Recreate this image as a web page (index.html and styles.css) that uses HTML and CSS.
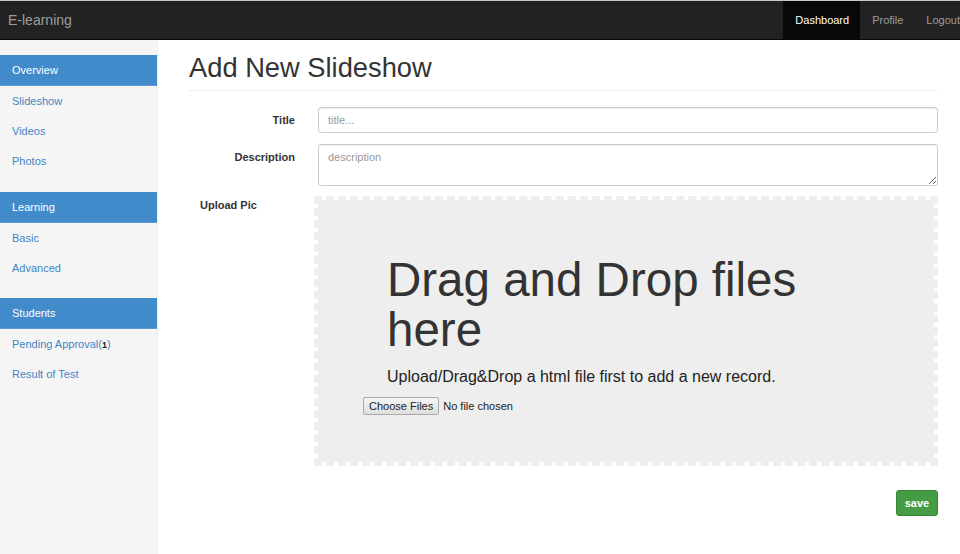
FILE: index.html
```html
<!DOCTYPE html>
<html>
<head>
<meta charset="utf-8">
<title>E-learning</title>
<link rel="stylesheet" href="styles.css">
</head>
<body>
<header class="navbar">
  <a class="brand" href="#">E-learning</a>
  <ul class="nav-right">
    <li><a class="active" href="#">Dashboard</a></li>
    <li><a href="#">Profile</a></li>
    <li><a href="#">Logout</a></li>
  </ul>
</header>
<div class="layout">
  <aside class="sidebar">
    <ul class="side-nav">
      <li class="active"><a href="#">Overview</a></li>
      <li><a href="#">Slideshow</a></li>
      <li><a href="#">Videos</a></li>
      <li><a href="#">Photos</a></li>
    </ul>
    <ul class="side-nav">
      <li class="active"><a href="#">Learning</a></li>
      <li><a href="#">Basic</a></li>
      <li><a href="#">Advanced</a></li>
    </ul>
    <ul class="side-nav">
      <li class="active"><a href="#">Students</a></li>
      <li><a href="#">Pending Approval(<b class="count">1</b>)</a></li>
      <li><a href="#">Result of Test</a></li>
    </ul>
  </aside>
  <main class="main">
    <h1 class="page-header">Add New Slideshow</h1>
    <form class="form">
      <div class="form-row">
        <label class="label">Title</label>
        <input class="control" type="text" placeholder="title...">
      </div>
      <div class="form-row">
        <label class="label">Description</label>
        <textarea class="control area" placeholder="description"></textarea>
      </div>
      <div class="upload-row">
        <label class="upload-label">Upload Pic</label>
        <div class="dropzone">
          <div class="drop-text">
            <h2 class="drop-title">Drag and Drop files here</h2>
            <p class="drop-note">Upload/Drag&amp;Drop a html file first to add a new record.</p>
          </div>
          <div class="file-input">
            <span class="file-btn">Choose Files</span>
            <span class="file-name">No file chosen</span>
          </div>
        </div>
      </div>
      <div class="actions">
        <button class="btn-save" type="button">save</button>
      </div>
    </form>
  </main>
</div>
</body>
</html>
```
FILE: styles.css
```css
* { box-sizing: border-box; }
html, body { margin: 0; padding: 0; }
body {
  font-family: "Liberation Sans", Arial, sans-serif;
  font-size: 11px;
  color: #333;
  background: #fff;
  width: 960px;
  height: 554px;
  overflow: hidden;
}
a { text-decoration: none; }
ul { list-style: none; margin: 0; padding: 0; }

.navbar {
  height: 40px;
  background: #222;
  border-top: 1px solid #c8c8c8;
  border-bottom: 1px solid #080808;
  display: flex;
  align-items: stretch;
  justify-content: space-between;
  overflow: hidden;
}
.brand {
  color: #9d9d9d;
  font-size: 14px;
  line-height: 38px;
  padding-left: 8px;
}
.nav-right {
  display: flex;
  margin-right: -11px;
}
.nav-right a {
  display: block;
  color: #9d9d9d;
  line-height: 38px;
  padding: 0 11px 0 12px;
  font-size: 11px;
}
.nav-right a.active {
  background: #080808;
  color: #fff;
}

.layout {
  display: flex;
  height: 514px;
}
.sidebar {
  width: 158px;
  flex: none;
  background: #f5f5f5;
  border-right: 1px solid #eee;
  padding-top: 15px;
}
.side-nav { margin-bottom: 16px; }
.side-nav + .side-nav + .side-nav { margin-top: -1px; }
.side-nav li a {
  display: block;
  height: 30px;
  line-height: 30px;
  padding-left: 12px;
  color: #3f85c6;
}
.side-nav li.active a {
  height: 31px;
  line-height: 30px;
  background: #428bca;
  border-bottom: 1px solid #5b9ad2;
  color: #fff;
}
.count {
  color: #222;
  font-size: 9px;
}

.main {
  flex: 1;
  padding: 0 22px 0 31px;
}
.page-header {
  margin: 12px 0 16px;
  font-size: 27.3px;
  font-weight: normal;
  line-height: 31px;
  padding-bottom: 7px;
  border-bottom: 1px solid #eee;
  color: #333;
}
.form-row {
  display: flex;
  align-items: flex-start;
  margin-bottom: 11px;
}
.label {
  width: 114px;
  flex: none;
  text-align: right;
  padding-right: 8px;
  margin-right: 15px;
  font-weight: bold;
  line-height: 26px;
}
.control {
  flex: 1;
  height: 26px;
  border: 1px solid #ccc;
  border-radius: 3px;
  padding: 4px 9px;
  font-family: "Liberation Sans", Arial, sans-serif;
  font-size: 11px;
  color: #555;
  box-shadow: inset 0 1px 1px rgba(0,0,0,0.075);
}
.control::placeholder { color: #999; }
.area {
  height: 42px;
  resize: vertical;
  padding-top: 6px;
}
.upload-row {
  display: flex;
  align-items: flex-start;
  margin-top: -1px;
}
.upload-label {
  width: 125px;
  flex: none;
  padding-left: 11px;
  padding-top: 2px;
  font-weight: bold;
  line-height: 14px;
}
.dropzone {
  flex: 1;
  height: 270px;
  background: #eee;
  background-clip: padding-box;
  border: 4px dashed #eee;
  padding-top: 55px;
}
.drop-text {
  padding: 0 70px 0 69px;
}
.drop-title {
  margin: 0;
  font-size: 47.5px;
  font-weight: normal;
  line-height: 50px;
  color: #333;
}
.drop-note {
  margin: 11px 0 0;
  font-size: 16px;
  line-height: 22px;
  color: #222;
}
.file-input {
  margin: 9px 0 0 45px;
  display: flex;
  align-items: center;
  gap: 4px;
}
.file-btn {
  display: inline-block;
  height: 18px;
  line-height: 16px;
  padding: 0 5px;
  border: 1px solid #a9a9a9;
  border-radius: 2px;
  background: linear-gradient(#f5f5f5, #dedede);
  color: #222;
  font-size: 11px;
}
.file-name { color: #222; font-size: 11px; }
.actions {
  display: flex;
  justify-content: flex-end;
  margin-top: 24px;
}
.btn-save {
  width: 42px;
  height: 26px;
  background: #449d44;
  border: 1px solid #398439;
  border-radius: 3px;
  color: #fff;
  font-family: "Liberation Sans", Arial, sans-serif;
  font-size: 11px;
  font-weight: bold;
  padding: 0;
}
```
